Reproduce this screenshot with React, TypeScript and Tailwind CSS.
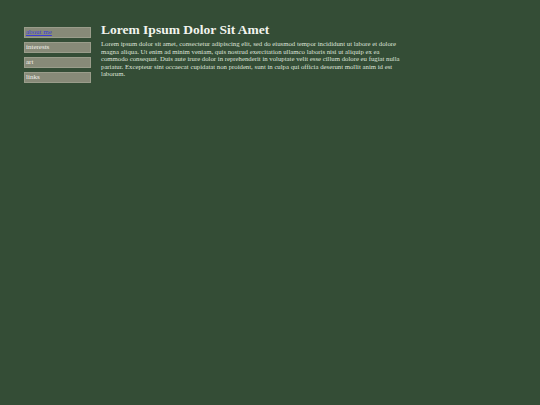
export default function App() {
  const links = ["about me", "interests", "art", "links"];

  return (
    <div className="min-h-screen bg-[#344d36] text-[#e8ece4] font-['Liberation_Serif',serif]">
      <div className="flex gap-[10px] pl-[24px] pt-[22px]">
        {/* sidebar */}
        <nav className="flex flex-col gap-[4px] w-[67px] pt-[5px] shrink-0">
          {links.map((l, i) => (
            <div
              key={l}
              className="h-[11px] bg-[#878a78] border border-[#9a9d8b] px-[1px] text-[7px] leading-[9px]"
            >
              {i === 0 ? (
                <a href="#" className="text-[#3b3bd6] underline">
                  {l}
                </a>
              ) : (
                <span className="text-[#f0f0ea]">{l}</span>
              )}
            </div>
          ))}
        </nav>

        {/* content */}
        <main className="w-[305px]">
          <h1 className="text-[13.5px] font-bold leading-[16px] text-[#f2f4ee]">
            Lorem Ipsum Dolor Sit Amet
          </h1>
          <p className="mt-[2px] text-[6.75px] leading-[7.6px] text-[#dfe3da]">
            Lorem ipsum dolor sit amet, consectetur adipiscing elit, sed do eiusmod tempor incididunt ut labore et dolore
            magna aliqua. Ut enim ad minim veniam, quis nostrud exercitation ullamco laboris nisi ut aliquip ex ea
            commodo consequat. Duis aute irure dolor in reprehenderit in voluptate velit esse cillum dolore eu fugiat nulla
            pariatur. Excepteur sint occaecat cupidatat non proident, sunt in culpa qui officia deserunt mollit anim id est
            laborum.
          </p>
        </main>
      </div>
    </div>
  );
}
